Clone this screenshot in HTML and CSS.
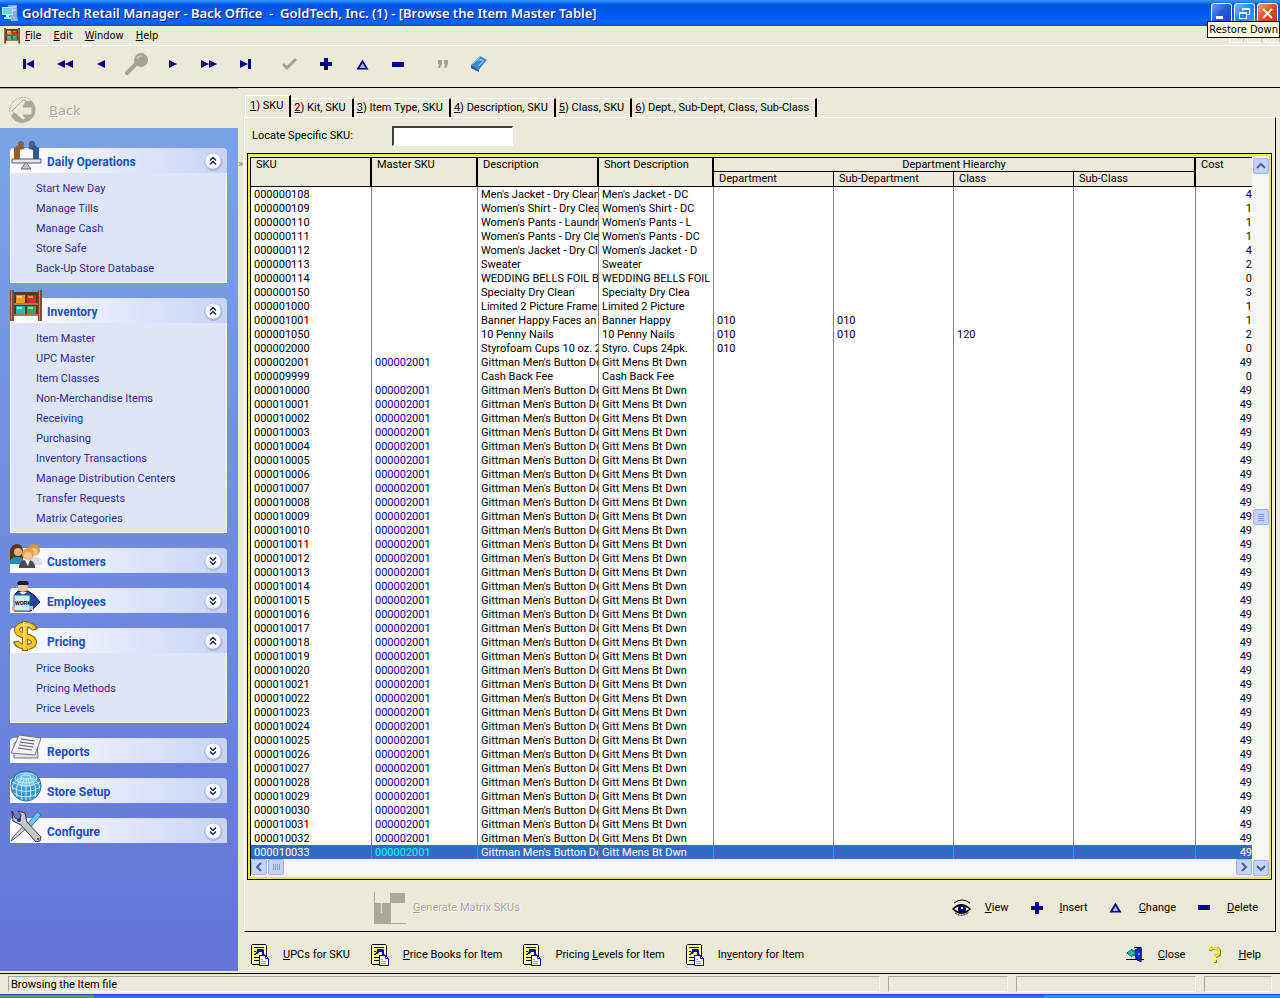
FILE: index.html
```html
<!DOCTYPE html>
<html lang="en">
<head>
    <meta charset="UTF-8">
    <meta name="viewport" content="width=device-width, initial-scale=1.0">
    <title>GoldTech Retail Manager - Back Office</title>
    <link rel="stylesheet" href="styles.css">
</head>
<body>
    <!-- shared icons -->
    <svg class="defs" width="0" height="0">
        <symbol id="plus" viewBox="0 0 12 12"><path d="M4 0h4v4h4v4H8v4H4V8H0V4h4z" fill="#000080"/><path d="M5 1h2v4h4v1H1V5h4z" fill="#0808b0"/></symbol>
        <symbol id="delta" viewBox="0 0 13 11"><path d="M6.500 .5L12.500 10.500H.5z" fill="#000080"/><path d="M6.500 4L9.500 9H3.500z" fill="#a8b0f0"/></symbol>
        <symbol id="minus" viewBox="0 0 12 5"><path d="M0 0h12v5H0z" fill="#000080"/><path d="M1 1h10v1H1z" fill="#0808b0"/></symbol>
        <symbol id="form" viewBox="0 0 18 22">
            <path d="M1.500 .5h13l1 1v18l-1 1h-13l-1-1v-18z" fill="#ffffa0" stroke="#000"/>
            <path d="M3 3.500h10M3 7.500h2M3 10.500h2M3 13.500h5M3 16.500h5" stroke="#000"/>
            <path d="M6 5h6l1 1v4h1l-3 3V8H8l-1 2H4l2-3z" fill="#0000b0"/>
            <path d="M8.500 11.500h6l3 3v7h-9z" fill="#fff" stroke="#0000a0"/>
            <path d="M14.500 11.500v3h3" fill="none" stroke="#0000a0"/>
            <path d="M10 15.500h2M10 17.500h5M10 19.500h5" stroke="#a0a0c0"/>
        </symbol>
        <symbol id="up" viewBox="0 0 26 26">
            <circle cx="13.500" cy="14" r="9" fill="#a9b4dc"/>
            <circle cx="13" cy="13" r="8" fill="#fff" stroke="#b8c4ea"/>
            <path d="M10 12.500l3-3 3 3M10 16.500l3-3 3 3" fill="none" stroke="#10206c" stroke-width="1.500"/>
        </symbol>
        <symbol id="down" viewBox="0 0 26 26">
            <circle cx="13.500" cy="14" r="9" fill="#a9b4dc"/>
            <circle cx="13" cy="13" r="8" fill="#fff" stroke="#b8c4ea"/>
            <path d="M10 9.500l3 3 3-3M10 13.500l3 3 3-3" fill="none" stroke="#10206c" stroke-width="1.500"/>
        </symbol>
        <symbol id="shelf" viewBox="0 0 32 32">
            <path d="M4 2h24v24H4z" fill="#5c3422"/>
            <path d="M6 5h9v8H6z" fill="#f09a28"/><path d="M17 5h9v8h-9z" fill="#e22a20"/>
            <path d="M6 16h9v8H6z" fill="#28b4c8"/><path d="M17 16h9v8h-9z" fill="#28a860"/>
            <path d="M7 6h5v2H7z" fill="#ffd080"/><path d="M18 6h5v2h-5z" fill="#ff8070"/><path d="M7 17h5v2H7z" fill="#90e8f0"/><path d="M18 17h5v2h-5z" fill="#80e0a0"/>
            <path d="M2 13h28v2H2zM2 24h28v2H2z" fill="#b07850"/>
            <path d="M0 0h4v31H0zM28 0h4v31h-4z" fill="#8a4a2c"/>
            <path d="M1 0h1v31H1zM29 0h1v31h-1z" fill="#c08560"/>
        </symbol>
    </svg>

    <header class="titlebar">
        <svg class="app-icon" width="16" height="18" viewBox="0 0 16 18"><path d="M6 1h9v11H6z" fill="#88a8e8"/><path d="M11 3h3M11 6h3" stroke="#eef"/><path d="M0 3h11v8H0z" fill="#b8ecff"/><path d="M1 4h9v6H1z" fill="#70d0f8"/><path d="M4 11h3v2h3v2H2v-2h2z" fill="#b8ecff"/><path d="M8 12h7l1 5H9z" fill="#9ab0e0"/></svg>
        <h1>GoldTech Retail Manager - Back Office &nbsp;- &nbsp;GoldTech, Inc. (1) - [Browse the Item Master Table]</h1>
        <div class="window-buttons">
            <button type="button" aria-label="Minimize"><svg width="19" height="19"><path d="M4 12h7v3H4z" fill="#fff"/></svg></button>
            <button type="button" class="hot" aria-label="Restore Down"><svg width="19" height="19"><path d="M7.500 7V4.500h7v6H12M4.500 8.500h7v6h-7zM4 9.500h8M7 5.500h8" fill="none" stroke="#fff"/></svg></button>
            <button type="button" class="quit" aria-label="Close"><svg width="19" height="19"><path d="M5 5l9 9M14 5l-9 9" stroke="#fff" stroke-width="2"/></svg></button>
        </div>
        <div class="tooltip" role="tooltip">Restore Down</div>
    </header>

    <nav class="menubar">
        <svg width="16" height="16"><use href="#shelf"/></svg>
        <a href="#"><u>F</u>ile</a>
        <a href="#"><u>E</u>dit</a>
        <a href="#"><u>W</u>indow</a>
        <a href="#"><u>H</u>elp</a>
        <div class="mdi-buttons"><span></span><span></span><span></span></div>
    </nav>

    <div class="toolbar">
        <button type="button" aria-label="First"><svg width="12" height="10"><path d="M0 0h3v10H0zM11 1v8L3 5z" fill="#000080"/></svg></button>
        <button type="button" aria-label="Page back"><svg width="16" height="10"><path d="M8 1v8L0 5zM16 1v8L8 5z" fill="#000080"/></svg></button>
        <button type="button" aria-label="Previous"><svg width="8" height="10"><path d="M8 1v8L0 5z" fill="#000080"/></svg></button>
        <button type="button" aria-label="Locate" disabled><svg width="24" height="24"><circle cx="16" cy="8" r="7" fill="#a5a292"/><path d="M11 12l-9 9" stroke="#a5a292" stroke-width="4" stroke-linecap="round"/><path d="M12 7q1-3 5-3" fill="none" stroke="#c8c5b4" stroke-width="2"/></svg></button>
        <button type="button" aria-label="Next"><svg width="8" height="10"><path d="M0 1v8l8-4z" fill="#000080"/></svg></button>
        <button type="button" aria-label="Page forward"><svg width="16" height="10"><path d="M0 1v8l8-4zM8 1v8l8-4z" fill="#000080"/></svg></button>
        <button type="button" aria-label="Last"><svg width="12" height="10"><path d="M9 0h3v10H9zM1 1v8l8-4z" fill="#000080"/></svg></button>
        <span class="sep"></span>
        <button type="button" aria-label="Select" disabled><svg width="16" height="14"><path d="M1 7l4 4L14 2" fill="none" stroke="#a5a292" stroke-width="3"/></svg></button>
        <button type="button" aria-label="Insert"><svg width="12" height="12"><use href="#plus"/></svg></button>
        <button type="button" aria-label="Change"><svg width="13" height="11"><use href="#delta"/></svg></button>
        <button type="button" aria-label="Delete"><svg width="12" height="5"><use href="#minus"/></svg></button>
        <span class="sep"></span>
        <button type="button" aria-label="Ditto" disabled><svg width="12" height="10"><path d="M1 1h4v4L3 9H1l1-4H1zM7 1h4v4L9 9H7l1-4H7z" fill="#a5a292"/></svg></button>
        <button type="button" aria-label="Help"><svg width="18" height="18"><path d="M1 10L10 1l7 4-8 10z" fill="#3c88d0"/><path d="M1 10l8 5v2l-8-4z" fill="#205a9c"/><path d="M9 15l8-10v2L9 17z" fill="#e8f4ff"/><path d="M8 6q1-2 4-1t-2 4l-1 2" fill="none" stroke="#c4e0f8"/><path d="M3 9l7-7" stroke="#90c8f0"/></svg></button>
    </div>

    <div class="workspace">
        <aside class="sidebar">
            <button type="button" class="back" disabled>
                <svg width="30" height="30"><path d="M5 6A13 13 0 0 1 24 5" fill="none" stroke="#aca899" stroke-dasharray="2 1"/><path d="M5 6A13 13 0 0 0 2 18" fill="none" stroke="#aca899" stroke-dasharray="2 1"/><path d="M24 5A13 13 0 1 1 3 20l6-8 9-7z" fill="#aca899"/><path d="M4 15L15 4l3 1-3 6h9v8h-9l3 4-3 1z" fill="#ece9d8" stroke="#aca899"/></svg>
                <span><u>B</u>ack</span>
            </button>
            <div class="panels">
                <section>
                    <h2><svg class="pic" width="32" height="32"><path d="M2 19h29v4H2z" fill="#e4e6ea" stroke="#555a64"/><path d="M16 22l5 7H11z" fill="#c0c5cc" stroke="#60656c"/><circle cx="11" cy="4" r="3" fill="#8c6040"/><path d="M4 19V8l5-3 6 2-1 2-4 1v9z" fill="#94582c"/><circle cx="22" cy="4" r="3" fill="#50606c"/><path d="M29 19V8l-5-3-6 2 1 2 4 1v9z" fill="#30589c"/></svg>Daily Operations<svg class="chev" width="26" height="26"><use href="#up"/></svg></h2>
                    <ul>
                        <li><a href="#">Start New Day</a></li>
                        <li><a href="#">Manage Tills</a></li>
                        <li><a href="#">Manage Cash</a></li>
                        <li><a href="#">Store Safe</a></li>
                        <li><a href="#">Back-Up Store Database</a></li>
                    </ul>
                </section>
                <section>
                    <h2><svg class="pic" width="32" height="32"><use href="#shelf"/></svg>Inventory<svg class="chev" width="26" height="26"><use href="#up"/></svg></h2>
                    <ul>
                        <li><a href="#">Item Master</a></li>
                        <li><a href="#">UPC Master</a></li>
                        <li><a href="#">Item Classes</a></li>
                        <li><a href="#">Non-Merchandise Items</a></li>
                        <li><a href="#">Receiving</a></li>
                        <li><a href="#">Purchasing</a></li>
                        <li><a href="#">Inventory Transactions</a></li>
                        <li><a href="#">Manage Distribution Centers</a></li>
                        <li><a href="#">Transfer Requests</a></li>
                        <li><a href="#">Matrix Categories</a></li>
                    </ul>
                </section>
                <section>
                    <h2><svg class="pic high" width="32" height="26"><path d="M0 20V6q2-6 7-6t6 6v14z" fill="#5c3420"/><path d="M0 20q0-7 6-7h3q5 0 5 7z" fill="#2890b8"/><circle cx="8" cy="8" r="4" fill="#e8b088"/><path d="M20 21v-8h6q6 0 6 8z" fill="#d8dce4"/><circle cx="24" cy="6" r="6" fill="#d89a30"/><circle cx="24" cy="8" r="4" fill="#f0c098"/><path d="M9 24q0-8 7-8h2q7 0 7 8z" fill="#484c54"/><path d="M15 16h5l-2 6z" fill="#fff"/><circle cx="18" cy="10" r="6" fill="#e8a838"/><circle cx="18" cy="12" r="4" fill="#f4c090"/></svg>Customers<svg class="chev" width="26" height="26"><use href="#down"/></svg></h2>
                </section>
                <section>
                    <h2><svg class="pic" width="32" height="32"><path d="M5 14l3-3h10l6 4 6 7-9 9H5z" fill="#2444a8" stroke="#101c50"/><circle cx="13" cy="7" r="5" fill="#f0c098"/><path d="M8 5l-1-2 2-2h8l2 2-1 2z" fill="#202020"/><path d="M9 12h8l-4 3z" fill="#f4f4f4"/><path d="M4 15h16v16H4z" fill="#c8ecf8" stroke="#486070"/><text x="5" y="25" class="work">WORK</text><path d="M2 26h3v4H2zM19 26h4v4h-4z" fill="#e8b088"/></svg>Employees<svg class="chev" width="26" height="26"><use href="#down"/></svg></h2>
                </section>
                <section>
                    <h2><svg class="pic" width="32" height="32"><g fill="none"><path d="M25 10C23 3 7 3 7 10c0 7 17 5 17 12 0 7-17 6-18-1M15 1v30" stroke="#8c6410" stroke-width="6"/><path d="M24 9C22 3 7 3 7 10c0 7 17 5 17 12 0 7-16 6-17 0M15 2v28" stroke="#f8c820" stroke-width="4"/><path d="M22 7C18 4 9 4 7 9M14 2v26" stroke="#fff090"/></g></svg>Pricing<svg class="chev" width="26" height="26"><use href="#up"/></svg></h2>
                    <ul>
                        <li><a href="#">Price Books</a></li>
                        <li><a href="#">Pricing Methods</a></li>
                        <li><a href="#">Price Levels</a></li>
                    </ul>
                </section>
                <section>
                    <h2><svg class="pic high" width="32" height="26"><path d="M4 9h23l1 15H4z" fill="#e0e2e8" stroke="#70747c"/><path d="M9 1l22 3-6 17-24-2z" fill="#f4f4f8" stroke="#70747c"/><path d="M11 5l14 2M10 8l14 2M9 11l14 2M8 14l14 2" stroke="#585c64"/></svg>Reports<svg class="chev" width="26" height="26"><use href="#down"/></svg></h2>
                </section>
                <section>
                    <h2><svg class="pic" width="32" height="32"><circle cx="16" cy="16" r="15" fill="#3c98d0"/><ellipse cx="16" cy="10" rx="10" ry="7" fill="#70c0e8"/><g fill="none" stroke="#c8ecfc"><ellipse cx="16" cy="7" rx="5" ry="2"/><ellipse cx="16" cy="8" rx="11" ry="5"/><path d="M2 12q14 8 28 0M1 17q15 9 30 0M3 23q13 8 26 0M13 8Q4 14 7 28M16 9v22M19 8q9 6 6 20M12 8Q2 10 2 20M20 8q10 2 10 12M14 9q-4 8-2 21M18 9q4 8 2 21"/></g><circle cx="16" cy="16" r="15" fill="none" stroke="#2870a8"/></svg>Store Setup<svg class="chev" width="26" height="26"><use href="#down"/></svg></h2>
                </section>
                <section>
                    <h2><svg class="pic" width="32" height="32"><path d="M17 15L27 2l4 3-11 13z" fill="#70c8f0" stroke="#2878b0"/><path d="M18 17L4 29l-3 2 2-4 12-13z" fill="#d0d4d8" stroke="#50545c"/><path d="M2 1l3 7 5 2 1-5-3-4 7 2 2 9 14 15-1 4-4 1L11 15 3 11z" fill="#c4c8cc" stroke="#30343c"/><circle cx="9" cy="10" r="2" fill="#183868"/><circle cx="28" cy="29" r="1" fill="#30343c"/></svg>Configure<svg class="chev" width="26" height="26"><use href="#down"/></svg></h2>
                </section>
            </div>
        </aside>
        <div class="splitter">»</div>

        <main>
            <div class="tabs" role="tablist">
                <button type="button" role="tab" class="active"><u>1</u>) SKU</button>
                <button type="button" role="tab"><u>2</u>) Kit, SKU</button>
                <button type="button" role="tab"><u>3</u>) Item Type, SKU</button>
                <button type="button" role="tab"><u>4</u>) Description, SKU</button>
                <button type="button" role="tab"><u>5</u>) Class, SKU</button>
                <button type="button" role="tab"><u>6</u>) Dept., Sub-Dept, Class, Sub-Class</button>
            </div>
            <div class="tab-panel">
                <div class="locate">
                    <label for="locate">Locate Specific SKU:</label>
                    <input type="text" id="locate" name="sku">
                </div>
                <div class="browse">
                    <div class="table-wrap">
                        <table>
                            <colgroup>
                                <col class="w121"><col class="w106"><col class="w121"><col class="w115">
                                <col class="w120"><col class="w120"><col class="w120"><col class="w122"><col>
                            </colgroup>
                            <thead>
                                <tr>
                                    <th rowspan="2">SKU</th>
                                    <th rowspan="2">Master SKU</th>
                                    <th rowspan="2">Description</th>
                                    <th rowspan="2">Short Description</th>
                                    <th colspan="4" class="group">Department Hiearchy</th>
                                    <th rowspan="2" class="cost">Cost</th>
                                </tr>
                                <tr class="sub">
                                    <th>Department</th>
                                    <th>Sub-Department</th>
                                    <th>Class</th>
                                    <th>Sub-Class</th>
                                </tr>
                            </thead>
                            <tbody id="items"></tbody>
                        </table>
                    </div>
                    <div class="vscroll">
                        <button type="button" aria-label="Scroll up"><svg width="16" height="16"><path d="M4 10l4-4 4 4" fill="none" stroke="#4d6185" stroke-width="2"/></svg></button>
                        <span class="thumb"><svg width="16" height="16"><path d="M5 5.500h6M5 7.500h6M5 9.500h6M5 11.500h6" stroke="#7c9ce4"/></svg></span>
                        <button type="button" aria-label="Scroll down"><svg width="16" height="16"><path d="M4 6l4 4 4-4" fill="none" stroke="#4d6185" stroke-width="2"/></svg></button>
                    </div>
                    <div class="hscroll">
                        <button type="button" aria-label="Scroll left"><svg width="16" height="16"><path d="M10 4L6 8l4 4" fill="none" stroke="#4d6185" stroke-width="2"/></svg></button>
                        <span class="thumb"><svg width="16" height="16"><path d="M5.500 5v6M7.500 5v6M9.500 5v6M11.500 5v6" stroke="#7c9ce4"/></svg></span>
                        <button type="button" class="right" aria-label="Scroll right"><svg width="16" height="16"><path d="M6 4l4 4-4 4" fill="none" stroke="#4d6185" stroke-width="2"/></svg></button>
                    </div>
                </div>
                <div class="actions">
                    <button type="button" class="generate" disabled><svg width="32" height="32"><path d="M0 0h1v32H0zM0 31h32v1H0zM0 11h17v20H0zM16 1h15v10H16z" fill="#aca899"/><path d="M7 11h1v10H7zM23 21h2v1h-2z" fill="#ece9d8"/></svg><span><u>G</u>enerate Matrix SKUs</span></button>
                    <button type="button"><span class="ico"><svg width="20" height="18"><path d="M2 4q8-6 16 0" fill="none" stroke="#000"/><path d="M0 10q9-10 19 0-9 10-19 0z" fill="#000"/><path d="M2 10q8-6 15 0-7 6-15 0z" fill="#fff"/><circle cx="10" cy="10" r="4" fill="#000060"/><path d="M9 8h2v2H9z" fill="#fff"/><path d="M3 14q7 5 14-1" fill="none" stroke="#000" stroke-dasharray="2 1"/></svg></span><span><u>V</u>iew</span></button>
                    <button type="button"><span class="ico"><svg width="12" height="12"><use href="#plus"/></svg></span><span><u>I</u>nsert</span></button>
                    <button type="button"><span class="ico"><svg width="13" height="11"><use href="#delta"/></svg></span><span><u>C</u>hange</span></button>
                    <button type="button"><span class="ico"><svg width="12" height="5"><use href="#minus"/></svg></span><span><u>D</u>elete</span></button>
                </div>
            </div>
            <div class="links">
                <button type="button"><span class="ico"><svg width="18" height="22"><use href="#form"/></svg></span><span><u>U</u>PCs for SKU</span></button>
                <button type="button"><span class="ico"><svg width="18" height="22"><use href="#form"/></svg></span><span><u>P</u>rice Books for Item</span></button>
                <button type="button"><span class="ico"><svg width="18" height="22"><use href="#form"/></svg></span><span>Pricing <u>L</u>evels for Item</span></button>
                <button type="button"><span class="ico"><svg width="18" height="22"><use href="#form"/></svg></span><span>In<u>v</u>entory for Item</span></button>
                <button type="button" class="close"><span class="ico"><svg width="18" height="18"><path d="M0 13.500h18M8 1.500h7v12" fill="none" stroke="#000"/><path d="M9 4l6-3v15l-5-3z" fill="#0838d0" stroke="#000060"/><path d="M1 7l5-4v2h3v4H6v2z" fill="#20c0c8" stroke="#006070"/><path d="M13 7v2" stroke="#fff"/></svg></span><span><u>C</u>lose</span></button>
                <button type="button"><span class="ico"><svg width="12" height="16"><path d="M1 4q1-3 5-3t5 4-4 4v2" fill="none" stroke="#8c8820" stroke-width="3"/><path d="M1 3q1-2 5-2t4 4-4 4v2" fill="none" stroke="#fff000" stroke-width="2"/><path d="M5 13h3v3H5z" fill="#8c8820"/><path d="M5 13h2v2H5z" fill="#fff000"/></svg></span><span><u>H</u>elp</span></button>
            </div>
        </main>
    </div>

    <footer class="statusbar">
        <span class="message">Browsing the Item file</span>
        <span class="s2"></span>
        <span class="s3"></span>
        <span class="s4"></span>
    </footer>
    <div class="taskbar"><span class="start"></span><span class="tray"></span></div>

    <script>
        // sku, master, description, short description, dept, sub-dept, class, cost
        const items = [
            ['000000108', '', "Men's Jacket - Dry Clean", "Men's Jacket - DC", '', '', '', '4'],
            ['000000109', '', "Women's Shirt - Dry Clea", "Women's Shirt - DC", '', '', '', '1'],
            ['000000110', '', "Women's Pants - Laundr", "Women's Pants - L", '', '', '', '1'],
            ['000000111', '', "Women's Pants - Dry Cle", "Women's Pants - DC", '', '', '', '1'],
            ['000000112', '', "Women's Jacket - Dry Cl", "Women's Jacket - D", '', '', '', '4'],
            ['000000113', '', 'Sweater', 'Sweater', '', '', '', '2'],
            ['000000114', '', 'WEDDING BELLS FOIL B', 'WEDDING BELLS FOIL', '', '', '', '0'],
            ['000000150', '', 'Specialty Dry Clean', 'Specialty Dry Clea', '', '', '', '3'],
            ['000001000', '', 'Limited 2 Picture Frame', 'Limited 2 Picture', '', '', '', '1'],
            ['000001001', '', 'Banner Happy Faces an', 'Banner Happy', '010', '010', '', '1'],
            ['000001050', '', '10 Penny Nails', '10 Penny Nails', '010', '010', '120', '2'],
            ['000002000', '', 'Styrofoam Cups 10 oz. 2', 'Styro. Cups 24pk.', '010', '', '', '0'],
            ['000002001', '000002001', "Gittman Men's Button Do", 'Gitt Mens Bt Dwn', '', '', '', '49'],
            ['000009999', '', 'Cash Back Fee', 'Cash Back Fee', '', '', '', '0']
        ];
        // matrix SKUs generated from the master
        for (let n = 10000; n <= 10033; n++) {
            items.push(['0000' + n, '000002001', "Gittman Men's Button Do", 'Gitt Mens Bt Dwn', '', '', '', '49']);
        }

        const tbody = document.getElementById('items');
        items.forEach((item, i) => {
            const tr = tbody.insertRow();
            if (i === items.length - 1) {
                tr.className = 'selected';
            }
            [...item.slice(0, 7), '', item[7]].forEach(text => {
                tr.insertCell().textContent = text;
            });
        });
    </script>
</body>
</html>
```
FILE: styles.css
```css
* { box-sizing: border-box; }
body {
  margin: 0;
  min-height: 100vh;
  display: flex;
  flex-direction: column;
  background: #ece9d8;
  color: #000;
  font: 11px/14px Roboto, "Liberation Sans", Arial, sans-serif;
}
button {
  display: flex;
  align-items: center;
  padding: 0;
  border: 0;
  background: none;
  color: inherit;
  font: inherit;
  white-space: nowrap;
}
a { color: inherit; text-decoration: none; }
svg { display: block; flex: none; }
.defs { position: absolute; }

/* title bar */
.titlebar {
  position: relative;
  display: flex;
  align-items: center;
  height: 26px;
  padding: 0 2px;
  background: linear-gradient(#3c96ff 0, #2080f8 2px, #0054e3 5px, #0058ee 14px, #0066ff 22px, #0050d8 26px);
}
.titlebar h1 {
  flex: 1;
  margin: 0 0 0 4px;
  color: #fff;
  font: 600 13px/26px "Noto Sans", "Open Sans", sans-serif;
  text-shadow: 1px 1px #0a1883;
  white-space: nowrap;
  overflow: hidden;
}
.window-buttons { display: flex; gap: 2px; }
.window-buttons button {
  width: 21px;
  height: 21px;
  border: 1px solid #fff;
  border-radius: 3px;
  background: linear-gradient(135deg, #7a9cf0, #2458dc 50%, #1c48c0);
}
.window-buttons .hot { background: linear-gradient(135deg, #78b4ff, #2c80f0 50%, #40a0ff); }
.window-buttons .quit { background: linear-gradient(135deg, #f0a080, #dc4c24 50%, #c03810); }
.tooltip {
  position: absolute;
  top: 21px;
  right: 0;
  z-index: 2;
  padding: 0 1px;
  border: 1px solid #000;
  background: #ffffe1;
  font: 11px/15px "DejaVu Sans Condensed", "Noto Sans", sans-serif;
}

/* menu and toolbar */
.menubar {
  display: flex;
  align-items: center;
  gap: 12px;
  height: 20px;
  padding-left: 4px;
  border-bottom: 1px solid #fff;
  font: 11px/18px "DejaVu Sans Condensed", "Noto Sans", sans-serif;
}
.menubar svg { margin-right: -7px; }
.mdi-buttons { display: flex; gap: 3px; margin-left: auto; }
.mdi-buttons span {
  width: 15px;
  height: 14px;
  border: 1px solid #fff;
  border-right-color: #c8c4b4;
  border-bottom-color: #fff;
}
.toolbar {
  display: flex;
  height: 42px;
  padding: 0 11px 5px;
  border-bottom: 1px solid #000;
}
.toolbar button { width: 36px; justify-content: center; }
.toolbar .sep { width: 9px; }

.workspace { display: flex; flex: 1; border-bottom: 1px solid #000; }

/* task list */
.sidebar { display: flex; flex-direction: column; width: 238px; padding-bottom: 2px; }
.back {
  height: 40px;
  padding: 4px 8px 0;
  gap: 11px;
  border-top: 1px solid #aca899;
  color: #aca899;
  font: 13px/20px "DejaVu Sans", sans-serif;
  text-shadow: 1px 1px #fff;
}
.panels {
  flex: 1;
  display: flex;
  flex-direction: column;
  gap: 15px;
  padding: 20px 11px 20px 10px;
  background: linear-gradient(#7ba2e7, #6375d6);
}
.panels h2 {
  position: relative;
  display: flex;
  align-items: center;
  justify-content: space-between;
  height: 25px;
  margin: 0;
  padding: 2px 0 0 37px;
  border-radius: 4px 4px 0 0;
  background: linear-gradient(90deg, #fff, #c6d3f7);
  color: #1c50c0;
  font: bold 12px/16px Roboto, "Liberation Sans", sans-serif;
}
.pic { position: absolute; left: 0; bottom: 1px; }
.pic.high { bottom: 3px; }
.chev { margin: -2px 1px 0 0; }
.work { font: bold 5px "Liberation Sans", sans-serif; }
.panels ul {
  margin: 0;
  padding: 6px 0 3px 25px;
  border: 1px solid #fff;
  border-top: 0;
  background: #dfe5f7;
  color: #2c2c9c;
  line-height: 20px;
  list-style: none;
}
.splitter { width: 6px; padding-top: 69px; color: #808080; overflow: hidden; }

/* browse */
main { flex: 1; min-width: 0; display: flex; flex-direction: column; padding-right: 4px; }
.tabs { display: flex; align-items: flex-end; height: 29px; padding-left: 1px; }
.tabs button {
  height: 19px;
  padding: 0 6px 0 3px;
  border-top: 1px solid #fff;
  border-right: 2px solid #000;
}
.tabs .active { height: 22px; padding: 0 6px 2px 4px; border-left: 1px solid #fff; border-radius: 2px 0 0; }
.tab-panel {
  flex: 1;
  display: flex;
  flex-direction: column;
  padding: 0 3px 0 2px;
  border: 1px solid #fff;
  border-right: 1px solid #000;
  border-bottom: 1px solid #000;
}
.locate { display: flex; align-items: center; height: 35px; padding-left: 5px; }
.locate label { width: 140px; }
.locate input {
  width: 121px;
  height: 20px;
  border: 1px solid #fff;
  border-top: 2px solid #404040;
  border-left: 2px solid #404040;
  background: #fff;
  font: inherit;
}
.browse {
  display: grid;
  grid-template-columns: minmax(0, 1fr) 17px;
  border: 1px solid #000;
  outline: 2px solid #f0f020;
  outline-offset: -3px;
  padding: 3px 2px;
}
.table-wrap { overflow: hidden; border-top: 1px solid #000; border-left: 1px solid #000; background: #fff; }
table { width: 100%; table-layout: fixed; border-collapse: separate; border-spacing: 0; }
.w106 { width: 106px; }
.w115 { width: 115px; }
.w120 { width: 120px; }
.w121 { width: 121px; }
.w122 { width: 122px; }
th {
  height: 14px;
  padding: 0 5px;
  border-right: 2px solid #000;
  border-bottom: 1px solid #000;
  background: #ece9d8;
  font-weight: normal;
  line-height: 13px;
  text-align: left;
  vertical-align: top;
  white-space: nowrap;
}
th.group { text-align: center; }
th.cost { border-right: 0; }
.sub th { height: 15px; border-right-width: 1px; }
.sub th:last-child { border-right-width: 2px; }
td {
  height: 14px;
  padding: 2px 0 0 3px;
  border-right: 1px solid #808080;
  line-height: 12px;
  white-space: nowrap;
  overflow: hidden;
}
td:nth-child(2) { color: #0000a0; }
td:last-child { border-right: 0; text-align: right; }
.selected td { background: #316ac5; color: #fff; }
.selected td:nth-child(2) { color: #00ffff; }

.vscroll {
  grid-row: 1 / 3;
  grid-column: 2;
  display: flex;
  flex-direction: column;
  justify-content: space-between;
  padding: 1px 0 0 1px;
  background: #f8f7f2;
}
.hscroll { display: flex; gap: 1px; height: 17px; background: #f8f7f2; border-left: 1px solid #000; }
.hscroll .right { margin-left: auto; }
.vscroll button, .hscroll button, .thumb {
  width: 16px;
  height: 16px;
  border: 1px solid #9cb4e8;
  border-radius: 2px;
  background: #c3d3fd;
  overflow: hidden;
}
.vscroll svg, .hscroll svg { margin: -1px; }

.actions, .links { display: flex; align-items: center; }
.actions { flex: 1; gap: 18px; min-height: 49px; padding: 4px 14px 0 127px; }
.generate { margin-right: auto; color: #aca899; text-shadow: 1px 1px #fff; }
.actions .generate { gap: 7px; }
.actions button, .links button { gap: 13px; }
.ico { display: flex; justify-content: center; width: 20px; }
.links { gap: 20px; height: 41px; padding: 4px 15px 0 6px; }
.close { margin-left: auto; }

/* status bar */
.statusbar { display: flex; gap: 8px; height: 20px; padding: 2px 8px; }
.statusbar span {
  height: 16px;
  border: 1px solid #fff;
  border-top-color: #aca899;
  border-left-color: #aca899;
}
.statusbar .message { flex: 1; padding-left: 2px; line-height: 15px; }
.s2 { width: 120px; }
.s3 { width: 180px; }
.s4 { width: 68px; }
.taskbar { display: flex; justify-content: space-between; height: 4px; background: #2c72dc; border-top: 1px solid #1c50b8; }
.start { width: 94px; background: #4ca04c; }
.tray { width: 236px; background: #14a0ee; }
```
